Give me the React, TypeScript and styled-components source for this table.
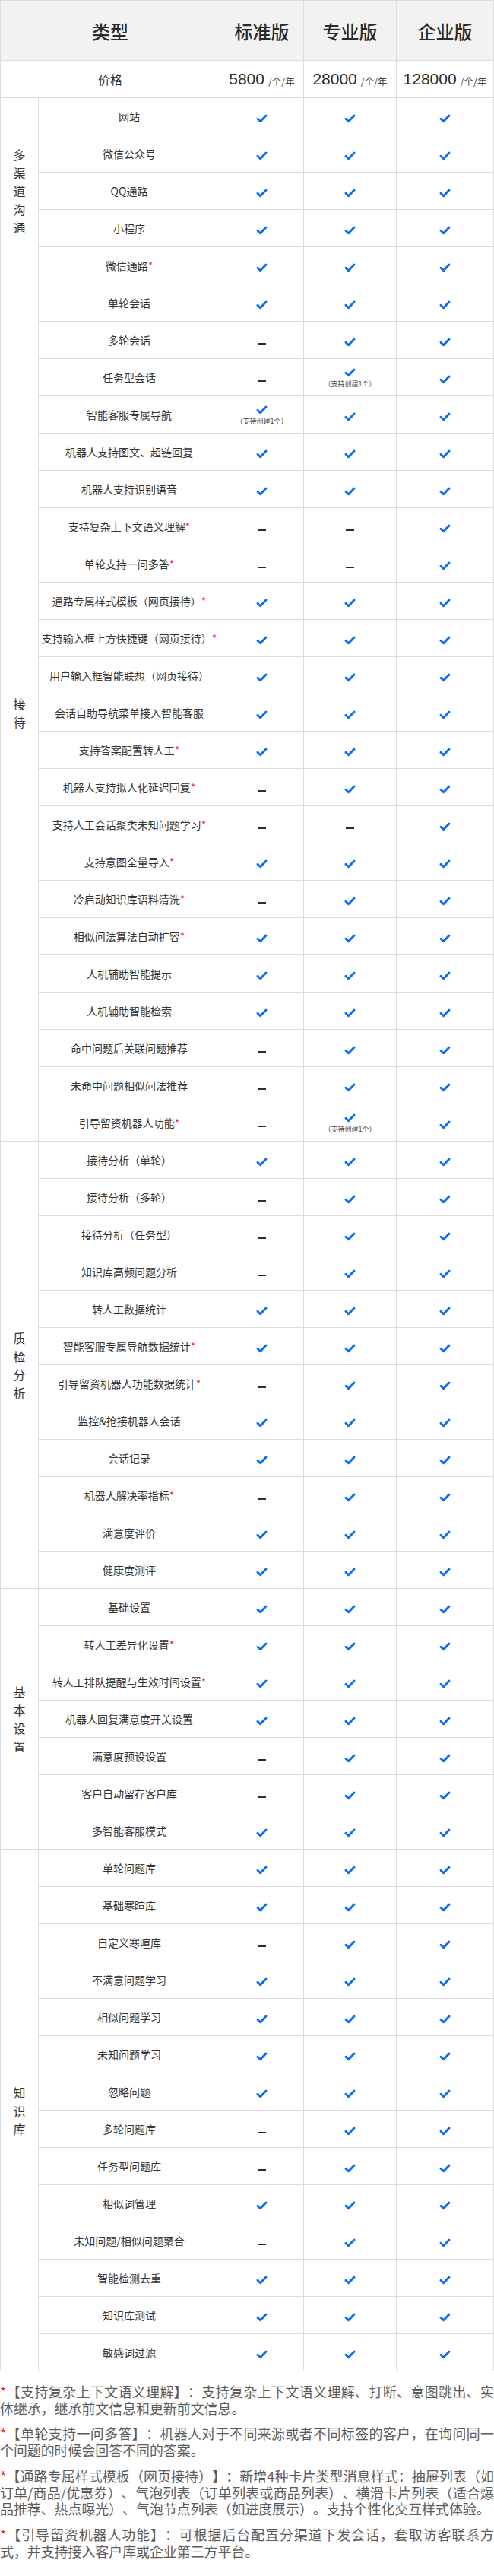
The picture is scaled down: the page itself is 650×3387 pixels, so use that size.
import styled, { createGlobalStyle } from "styled-components";

type Mark = "y" | "n" | "c";

const GlobalStyle = createGlobalStyle`
  html, body {
    margin: 0;
    padding: 0;
    background: #fff;
  }
  body {
    font-family: "Noto Sans CJK SC", "Liberation Sans", sans-serif;
    color: #333;
  }
`;

// y = supported, n = not supported, c = supported with limit (支持创建1个)
const sections: { title: string; rows: [string, string][] }[] = [
  {
    title: "多渠道沟通",
    rows: [
      ["网站", "yyy"],
      ["微信公众号", "yyy"],
      ["QQ通路", "yyy"],
      ["小程序", "yyy"],
      ["微信通路*", "yyy"],
    ],
  },
  {
    title: "接待",
    rows: [
      ["单轮会话", "yyy"],
      ["多轮会话", "nyy"],
      ["任务型会话", "ncy"],
      ["智能客服专属导航", "cyy"],
      ["机器人支持图文、超链回复", "yyy"],
      ["机器人支持识别语音", "yyy"],
      ["支持复杂上下文语义理解*", "nny"],
      ["单轮支持一问多答*", "nny"],
      ["通路专属样式模板（网页接待）*", "yyy"],
      ["支持输入框上方快捷键（网页接待）*", "yyy"],
      ["用户输入框智能联想（网页接待）", "yyy"],
      ["会话自助导航菜单接入智能客服", "yyy"],
      ["支持答案配置转人工*", "yyy"],
      ["机器人支持拟人化延迟回复*", "nyy"],
      ["支持人工会话聚类未知问题学习*", "nny"],
      ["支持意图全量导入*", "yyy"],
      ["冷启动知识库语料清洗*", "nyy"],
      ["相似问法算法自动扩容*", "yyy"],
      ["人机辅助智能提示", "yyy"],
      ["人机辅助智能检索", "yyy"],
      ["命中问题后关联问题推荐", "nyy"],
      ["未命中问题相似问法推荐", "nyy"],
      ["引导留资机器人功能*", "ncy"],
    ],
  },
  {
    title: "质检分析",
    rows: [
      ["接待分析（单轮）", "yyy"],
      ["接待分析（多轮）", "nyy"],
      ["接待分析（任务型）", "nyy"],
      ["知识库高频问题分析", "nyy"],
      ["转人工数据统计", "yyy"],
      ["智能客服专属导航数据统计*", "yyy"],
      ["引导留资机器人功能数据统计*", "nyy"],
      ["监控&抢接机器人会话", "yyy"],
      ["会话记录", "yyy"],
      ["机器人解决率指标*", "nyy"],
      ["满意度评价", "yyy"],
      ["健康度测评", "yyy"],
    ],
  },
  {
    title: "基本设置",
    rows: [
      ["基础设置", "yyy"],
      ["转人工差异化设置*", "yyy"],
      ["转人工排队提醒与生效时间设置*", "yyy"],
      ["机器人回复满意度开关设置", "yyy"],
      ["满意度预设设置", "nyy"],
      ["客户自动留存客户库", "nyy"],
      ["多智能客服模式", "yyy"],
    ],
  },
  {
    title: "知识库",
    rows: [
      ["单轮问题库", "yyy"],
      ["基础寒暄库", "yyy"],
      ["自定义寒暄库", "nyy"],
      ["不满意问题学习", "yyy"],
      ["相似问题学习", "yyy"],
      ["未知问题学习", "yyy"],
      ["忽略问题", "yyy"],
      ["多轮问题库", "nyy"],
      ["任务型问题库", "nyy"],
      ["相似词管理", "yyy"],
      ["未知问题/相似问题聚合", "nyy"],
      ["智能检测去重", "yyy"],
      ["知识库测试", "yyy"],
      ["敏感词过滤", "yyy"],
    ],
  },
];

const notes = [
  "【支持复杂上下文语义理解】：支持复杂上下文语义理解、打断、意图跳出、实体继承，继承前文信息和更新前文信息。",
  "【单轮支持一问多答】：机器人对于不同来源或者不同标签的客户，在询问同一个问题的时候会回答不同的答案。",
  "【通路专属样式模板（网页接待）】：新增4种卡片类型消息样式：抽屉列表（如订单/商品/优惠券）、气泡列表（订单列表或商品列表）、横滑卡片列表（适合爆品推荐、热点曝光）、气泡节点列表（如进度展示）。支持个性化交互样式体验。",
  "【引导留资机器人功能】：可根据后台配置分渠道下发会话，套取访客联系方式，并支持接入客户库或企业第三方平台。",
];

const Check = () => (
  <CheckIcon width="15" height="12" viewBox="0 0 15 12">
    <path
      d="M2 6.3 L5.6 9.8 L13 2"
      fill="none"
      stroke="#0b6cf3"
      strokeWidth="2.9"
      strokeLinecap="round"
      strokeLinejoin="round"
    />
  </CheckIcon>
);

const MarkCell = ({ mark }: { mark: Mark }) => (
  <Cell>
    {mark === "n" && <Dash />}
    {mark === "y" && <Check />}
    {mark === "c" && (
      <Stack>
        <Check />
        <Limit>（支持创建1个）</Limit>
      </Stack>
    )}
  </Cell>
);

const Label = ({ text }: { text: string }) => {
  const star = text.endsWith("*");
  return <Feature $star={star}>{star ? text.slice(0, -1) : text}</Feature>;
};

const App = () => {
  return (
    <Page>
      <GlobalStyle />
      <Table>
        <Head $wide>类型</Head>
        <Head>标准版</Head>
        <Head>专业版</Head>
        <Head>企业版</Head>

        <PriceLabel>价格</PriceLabel>
        <Cell>
          <Price>5800</Price>
          <Unit>/个/年</Unit>
        </Cell>
        <Cell>
          <Price>28000</Price>
          <Unit>/个/年</Unit>
        </Cell>
        <Cell>
          <Price>128000</Price>
          <Unit>/个/年</Unit>
        </Cell>

        {sections.map((s) => [
          <Category key={s.title} $span={s.rows.length}>
            <Vertical>{s.title}</Vertical>
          </Category>,
          ...s.rows.map(([name, marks]) => [
            <Label key={name} text={name} />,
            ...marks.split("").map((m, i) => <MarkCell key={name + i} mark={m as Mark} />),
          ]),
        ])}
      </Table>

      <Notes>
        {notes.map((text) => (
          <Note key={text}>{text}</Note>
        ))}
      </Notes>
    </Page>
  );
};

export default App;

const Page = styled.div`
  width: 650px;
`;

const Table = styled.div`
  display: grid;
  grid-template-columns: 49px 238px 109px 121px 127px;
  grid-template-rows: 78px 48px;
  grid-auto-rows: 48px;
  gap: 1px;
  padding: 1px;
  background: #dcdcdc;
`;

const Cell = styled.div`
  background: #fff;
  display: flex;
  align-items: center;
  justify-content: center;
`;

const Head = styled(Cell)<{ $wide?: boolean }>`
  grid-column: ${(p) => (p.$wide ? "span 2" : "auto")};
  background: #f2f2f2;
  font-size: 24px;
  font-weight: 500;
  color: #2b2b2b;
`;

const PriceLabel = styled(Cell)`
  grid-column: span 2;
  font-size: 16px;
  color: #333;
`;

const Price = styled.span`
  font-family: "Liberation Sans", "Noto Sans CJK SC", sans-serif;
  font-size: 21px;
  color: #2b2b2b;
`;

const Unit = styled.span`
  font-size: 12.5px;
  color: #444;
  margin-left: 5px;
  margin-top: 4px;
`;

const Category = styled(Cell)<{ $span: number }>`
  grid-row: span ${(p) => p.$span};
`;

const Vertical = styled.div`
  width: 16px;
  font-size: 16px;
  line-height: 24px;
  color: #333;
  text-align: center;
`;

const Feature = styled(Cell)<{ $star?: boolean }>`
  font-size: 14px;
  color: #333;
  white-space: nowrap;

  &::after {
    content: "${(p) => (p.$star ? "*" : "")}";
    color: #ff1a1a;
  }
`;

const CheckIcon = styled.svg`
  display: block;
  margin-top: 6px;
`;

const Dash = styled.span`
  display: block;
  width: 11px;
  height: 2px;
  background: #2b2b2b;
  margin-top: 9px;
`;

const Stack = styled.div`
  display: flex;
  flex-direction: column;
  align-items: center;
  gap: 3px;
  margin-top: 2px;

  svg {
    margin-top: 0;
  }
`;

const Limit = styled.span`
  font-size: 9px;
  line-height: 12px;
  color: #444;
  white-space: nowrap;
`;

const Notes = styled.div`
  padding: 16px 0 23px;
`;

const Note = styled.p`
  margin: 0 0 12px;
  font-size: 17.92px;
  line-height: 21.7px;
  color: #5c5c5c;
  text-align: justify;
  text-spacing-trim: space-all;

  &::before {
    content: "*";
    color: #ff1a1a;
  }

  &:last-child {
    margin-bottom: 0;
  }
`;
